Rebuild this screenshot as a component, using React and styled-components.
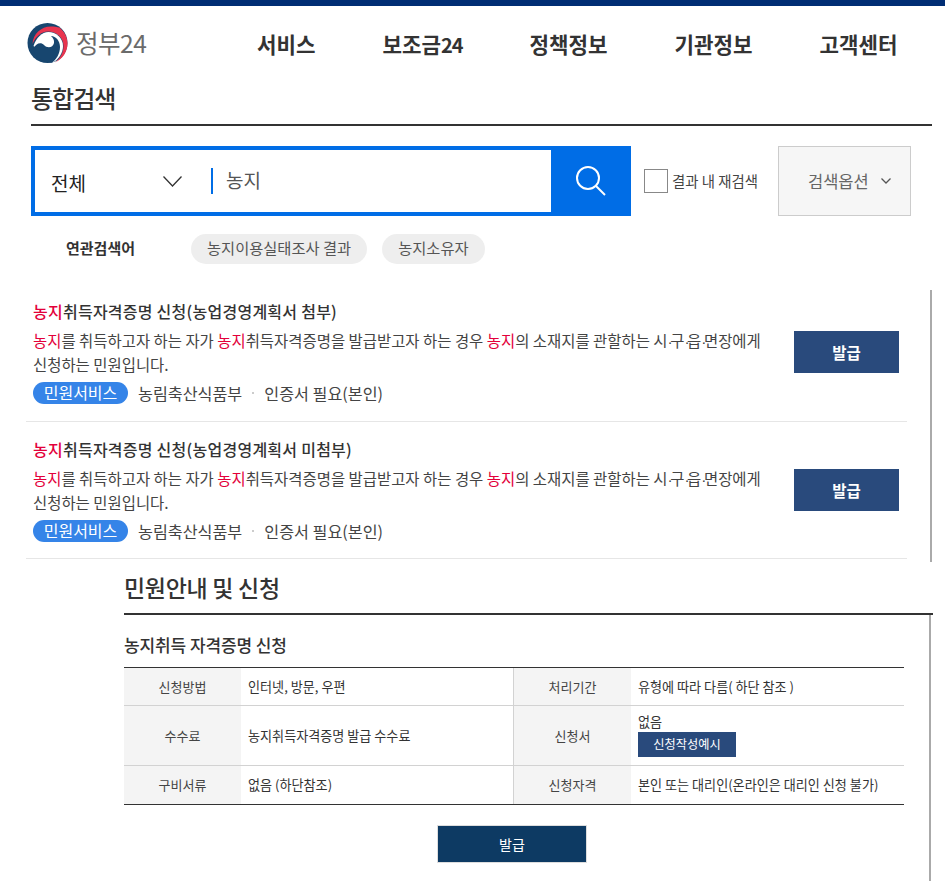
import React from 'react'
import styled, { createGlobalStyle } from 'styled-components'

const GlobalStyle = createGlobalStyle`
  html, body { margin: 0; padding: 0; background: #fff; }
  body {
    font-family: "Noto Sans CJK KR", "Noto Sans", sans-serif;
    color: #333;
    overflow: hidden;
  }
  * { box-sizing: border-box; }
`

const Page = styled.div`
  width: 945px;
  height: 881px;
  overflow: hidden;
  border-top: 6px solid #002d74;
`

const Header = styled.header`
  display: flex;
  align-items: center;
  height: 72px;
  padding: 0 0 0 27px;
`

const Logo = styled.div`
  display: flex;
  align-items: center;
  gap: 8px;
  width: 230px;
  margin-top: 2px;
`

const LogoText = styled.span`
  font-size: 24.5px;
  line-height: 30px;
  color: #6b6b6b;
  letter-spacing: -0.5px;
`

const Nav = styled.nav`
  display: flex;
  gap: 67px;
  padding-top: 4px;
`

const NavItem = styled.span`
  font-size: 21.2px;
  font-weight: 700;
  line-height: 28px;
  color: #333;
`

const NavDigits = styled.span`
  font-size: 20px;
  letter-spacing: -1px;
`

const TitleBar = styled.div`
  margin: 0 13px 0 31px;
  height: 48px;
  border-bottom: 2px solid #333;
`

const PageTitle = styled.h1`
  margin: 0;
  font-size: 24px;
  font-weight: 500;
  line-height: 40px;
  color: #333;
  letter-spacing: -1px;
`

const SearchRow = styled.div`
  display: flex;
  align-items: flex-start;
  margin: 20px 0 0 31px;
`

const SearchBox = styled.div`
  display: flex;
  align-items: center;
  flex: none;
  width: 600px;
  height: 70px;
  border: 4px solid #006de6;
`

const ScopeSelect = styled.div`
  display: flex;
  align-items: center;
  justify-content: space-between;
  flex: none;
  width: 176px;
  padding: 0 29px 0 16px;
  font-size: 19px;
  color: #222;
`

const ScopeText = styled.span`
  padding-top: 3px;
`

const SearchInput = styled.div`
  flex: 1;
  height: 26px;
  border-left: 2px solid #006de6;
  padding-left: 13px;
  font-size: 19px;
  line-height: 24px;
  color: #555;
`

const SearchButton = styled.div`
  display: flex;
  align-items: center;
  justify-content: center;
  flex: none;
  width: 80px;
  height: 70px;
  margin-right: -4px;
  background: #006de6;
`

const CheckLabel = styled.label`
  display: flex;
  align-items: center;
  gap: 4px;
  flex: none;
  width: 114px;
  height: 70px;
  margin-left: 13px;
  padding-bottom: 1px;
  font-size: 14.4px;
  white-space: nowrap;
  color: #444;
`

const CheckBox = styled.span`
  flex: none;
  width: 24px;
  height: 24px;
  border: 1px solid #888;
  background: #fff;
`

const OptionButton = styled.div`
  display: flex;
  align-items: center;
  gap: 12px;
  flex: none;
  width: 133px;
  height: 70px;
  margin-left: 20px;
  padding-left: 29px;
  background: #f6f6f6;
  border: 1px solid #ccc;
  font-size: 16.5px;
  color: #666;
`

const RelatedRow = styled.div`
  display: flex;
  align-items: center;
  margin: 18px 0 0 66px;
  height: 30px;
`

const RelatedLabel = styled.span`
  width: 125px;
  padding-bottom: 3px;
  font-size: 15px;
  font-weight: 700;
  color: #333;
`

const RelatedTag = styled.span`
  height: 30px;
  margin-right: 15px;
  padding: 0 16px;
  border-radius: 15px;
  background: #eee;
  font-size: 15.3px;
  line-height: 27px;
  color: #555;
`

const Results = styled.section`
  margin: 26px 0 0 0;
  width: 932px;
  height: 272px;
  border-right: 2px solid #aaa;
`

const ResultItem = styled.article`
  display: flex;
  align-items: center;
  width: 881px;
  height: ${p => p.$height}px;
  margin-left: 26px;
  padding: 0 8px ${p => p.$bottom}px 7px;
  border-bottom: 1px solid #e6e6e6;
`

const ResultBody = styled.div`
  flex: none;
  width: 740px;
`

const ResultTitle = styled.h3`
  margin: 0 0 7px;
  font-size: 16px;
  font-weight: 500;
  line-height: 22px;
  letter-spacing: 0.25px;
  color: #333;
`

const ResultDesc = styled.p`
  margin: 0;
  font-size: 15.45px;
  line-height: 23px;
  white-space: nowrap;
  color: #444;
`

const Hit = styled.span`
  color: #e3003a;
`

const MidDot = styled.span`
  font-family: "Liberation Sans", sans-serif;
  letter-spacing: -2.5px;
`

const MetaRow = styled.div`
  display: flex;
  align-items: center;
  margin-top: 6px;
  font-size: 16.2px;
  line-height: 22px;
  color: #444;
`

const ServiceBadge = styled.span`
  width: 95px;
  height: 22px;
  margin-right: 10px;
  border-radius: 11px;
  background: #3584e8;
  text-align: center;
  font-size: 16px;
  line-height: 21px;
  color: #fff;
`

const MetaDot = styled.span`
  width: 2px;
  height: 2px;
  margin: 0 10px;
  background: #ccc;
`

const IssueButton = styled.button`
  flex: none;
  width: 105px;
  height: 42px;
  margin-left: 21px;
  border: 0;
  background: #294a7c;
  font: 700 15.5px "Noto Sans CJK KR", sans-serif;
  color: #fff;
`

const Guide = styled.section`
  margin-left: 124px;
  width: 809px;
`

const GuideTitle = styled.h2`
  margin: 0;
  height: 53px;
  border-bottom: 2px solid #333;
  font-size: 23px;
  font-weight: 500;
  line-height: 51px;
  color: #333;
  letter-spacing: -0.3px;
`

const GuideBody = styled.div`
  width: 807px;
  height: 267px;
  border-right: 2px solid #aaa;
`

const ServiceName = styled.h3`
  margin: 0;
  height: 52px;
  font-size: 17px;
  font-weight: 500;
  line-height: 59px;
  color: #333;
  letter-spacing: -0.1px;
`

const InfoTable = styled.div`
  display: grid;
  grid-template-columns: 117px 272px 118px 273px;
  grid-template-rows: 38px 60px 38px;
  width: 780px;
  border-top: 1px solid #333;
  border-bottom: 1px solid #333;
`

const HeadCell = styled.div`
  display: flex;
  align-items: center;
  justify-content: center;
  padding-bottom: 1px;
  background: #f4f4f4;
  font-size: 13px;
  color: #444;
  border-bottom: ${p => (p.$last ? '0' : '1px solid #d2d2d2')};
  border-left: ${p => (p.$divided ? '1px solid #d2d2d2' : '0')};
`

const ValueCell = styled.div`
  display: flex;
  flex-direction: column;
  justify-content: center;
  align-items: flex-start;
  padding: 0 0 1px 7px;
  font-size: 13.1px;
  line-height: 17px;
  color: #333;
  border-bottom: ${p => (p.$last ? '0' : '1px solid #d2d2d2')};
`

const ExampleButton = styled.span`
  width: 98px;
  height: 25px;
  margin-top: 2px;
  background: #294a7c;
  text-align: center;
  font-size: 12.2px;
  line-height: 24px;
  color: #fff;
`

const SubmitRow = styled.div`
  display: flex;
  justify-content: center;
  width: 776px;
  margin-top: 20px;
`

const SubmitButton = styled.button`
  width: 150px;
  height: 38px;
  border: 1px solid #ddd;
  background: #0d3a63;
  font: 14px "Noto Sans CJK KR", sans-serif;
  color: #fff;
`

const LogoMark = () => (
  <svg width="41" height="40" viewBox="0 0 41 40">
    <circle cx="20.500" cy="20" r="20" fill="#17466f" />
    <path d="M5.500 21C6 11 14 3.500 24 3.500C27 3.500 30 4 32.500 4.500C37.500 9 40.500 14 40.500 20.500C40.500 29 35.500 36 28 39.500C33.500 35.500 36.500 29 36.500 23C36.500 14 29 8.500 21 8.500C14 8.500 8.500 14 5.500 21Z" fill="#e8344e" />
    <path d="M6.500 23C9 15 15 9 21.500 9C29 9 36 15 36 23C36 30 32 36 26 39.500Z" fill="#fff" />
    <path d="M6 26C9 20 14 19 17 22C20 25.500 26 25 27 20C27.500 16 25 14 24 13C29 13 33 18 33 24C33 31 29 37 25 39.500C16 39.500 9 35 6 26Z" fill="#17466f" />
  </svg>
)

const SearchIcon = () => (
  <svg width="30" height="30" viewBox="0 0 30 30" fill="none" stroke="#fff" strokeWidth="2">
    <circle cx="12" cy="12" r="11" />
    <path d="M20 20 L29 29" />
  </svg>
)

const Chevron = ({ size, height, width = 1.3, color = '#333' }) => (
  <svg width={size} height={height} viewBox={`0 0 ${size} ${height}`} fill="none" stroke={color} strokeWidth={width}>
    <path d={`M0.500 0.500 L${size / 2} ${height - 1} L${size - 0.5} 0.500`} />
  </svg>
)

const ResultCard = ({ suffix, height, bottom }) => (
  <ResultItem $height={height} $bottom={bottom}>
    <ResultBody>
      <ResultTitle><Hit>농지</Hit>취득자격증명 신청({suffix})</ResultTitle>
      <ResultDesc>
        <Hit>농지</Hit>를 취득하고자 하는 자가 <Hit>농지</Hit>취득자격증명을 발급받고자 하는 경우 <Hit>농지</Hit>의 소재지를 관할하는 시<MidDot>·</MidDot>구<MidDot>·</MidDot>읍<MidDot>·</MidDot>면장에게
        <br />신청하는 민원입니다.
      </ResultDesc>
      <MetaRow>
        <ServiceBadge>민원서비스</ServiceBadge>
        농림축산식품부
        <MetaDot />
        인증서 필요(본인)
      </MetaRow>
    </ResultBody>
    <IssueButton>발급</IssueButton>
  </ResultItem>
)

export default function App() {
  return (
    <Page>
      <GlobalStyle />
      <Header>
        <Logo>
          <LogoMark />
          <LogoText>정부24</LogoText>
        </Logo>
        <Nav>
          <NavItem>서비스</NavItem>
          <NavItem>보조금<NavDigits>24</NavDigits></NavItem>
          <NavItem>정책정보</NavItem>
          <NavItem>기관정보</NavItem>
          <NavItem>고객센터</NavItem>
        </Nav>
      </Header>
      <TitleBar><PageTitle>통합검색</PageTitle></TitleBar>
      <SearchRow>
        <SearchBox>
          <ScopeSelect>
            <ScopeText>전체</ScopeText>
            <Chevron size={19} height={11} />
          </ScopeSelect>
          <SearchInput>농지</SearchInput>
          <SearchButton><SearchIcon /></SearchButton>
        </SearchBox>
        <CheckLabel><CheckBox />결과 내 재검색</CheckLabel>
        <OptionButton>
          검색옵션
          <Chevron size={10} height={6} color="#555" />
        </OptionButton>
      </SearchRow>
      <RelatedRow>
        <RelatedLabel>연관검색어</RelatedLabel>
        <RelatedTag>농지이용실태조사 결과</RelatedTag>
        <RelatedTag>농지소유자</RelatedTag>
      </RelatedRow>
      <Results>
        <ResultCard suffix="농업경영계획서 첨부" height={132} bottom={8} />
        <ResultCard suffix="농업경영계획서 미첨부" height={137} bottom={0} />
      </Results>
      <Guide>
        <GuideTitle>민원안내 및 신청</GuideTitle>
        <GuideBody>
          <ServiceName>농지취득 자격증명 신청</ServiceName>
          <InfoTable>
            <HeadCell>신청방법</HeadCell>
            <ValueCell>인터넷, 방문, 우편</ValueCell>
            <HeadCell $divided>처리기간</HeadCell>
            <ValueCell>유형에 따라 다름( 하단 참조 )</ValueCell>
            <HeadCell>수수료</HeadCell>
            <ValueCell>농지취득자격증명 발급 수수료</ValueCell>
            <HeadCell $divided>신청서</HeadCell>
            <ValueCell>
              없음
              <ExampleButton>신청작성예시</ExampleButton>
            </ValueCell>
            <HeadCell $last>구비서류</HeadCell>
            <ValueCell $last>없음 (하단참조)</ValueCell>
            <HeadCell $last $divided>신청자격</HeadCell>
            <ValueCell $last>본인 또는 대리인(온라인은 대리인 신청 불가)</ValueCell>
          </InfoTable>
          <SubmitRow><SubmitButton>발급</SubmitButton></SubmitRow>
        </GuideBody>
      </Guide>
    </Page>
  )
}
